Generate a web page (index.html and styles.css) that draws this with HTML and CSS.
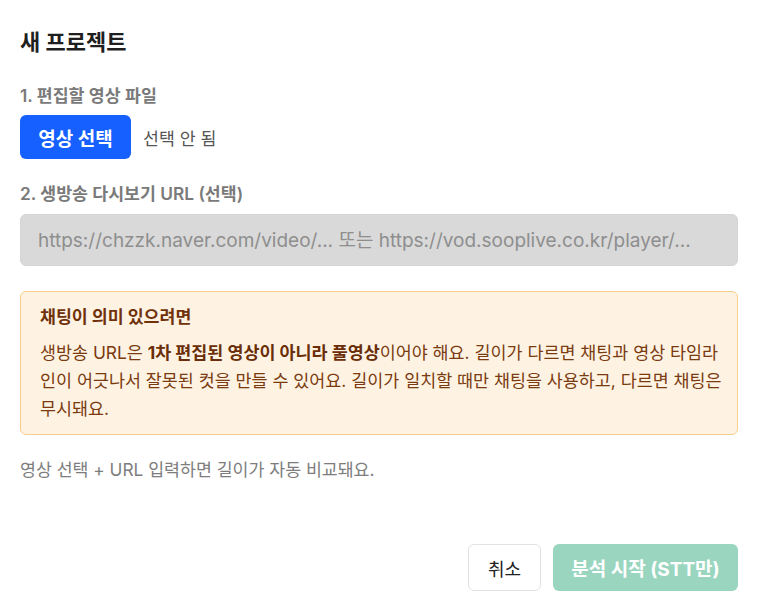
FILE: index.html
```html
<!DOCTYPE html>
<html lang="ko">
<head>
<meta charset="utf-8">
<link rel="stylesheet" href="styles.css">
</head>
<body>
<div class="dialog">
  <h1 class="title">새 프로젝트</h1>
  <div class="label first">1. 편집할 영상 파일</div>
  <div class="file-row">
    <button class="btn-primary">영상 선택</button>
    <span class="file-state">선택 안 됨</span>
  </div>
  <div class="label second">2. 생방송 다시보기 URL (선택)</div>
  <input class="url" type="text" placeholder="https://chzzk.naver.com/video/... 또는 https://vod.sooplive.co.kr/player/..." disabled>
  <div class="notice">
    <div class="notice-title">채팅이 의미 있으려면</div>
    <p class="notice-body">생방송 URL은 <b>1차 편집된 영상이 아니라 풀영상</b>이어야 해요. 길이가 다르면 채팅과 영상 타임라인이 어긋나서 잘못된 컷을 만들 수 있어요. 길이가 일치할 때만 채팅을 사용하고, 다르면 채팅은 무시돼요.</p>
  </div>
  <p class="hint">영상 선택 + URL 입력하면 길이가 자동 비교돼요.</p>
  <div class="actions">
    <button class="btn-cancel">취소</button>
    <button class="btn-start" disabled>분석 시작 (STT만)</button>
  </div>
</div>
</body>
</html>
```
FILE: styles.css
```css
* { box-sizing: border-box; }
html, body { margin: 0; padding: 0; background: #fff; }
body {
  font-family: Inter, "Noto Sans CJK KR", sans-serif;
  color: #222;
}
.dialog {
  width: 759px;
  padding: 28px 21px 0 20px;
  display: flex;
  flex-direction: column;
}
.title {
  margin: 0;
  font-size: 22px;
  font-weight: 700;
  line-height: 28px;
  color: #1f1f1f;
}
.label {
  font-size: 17.3px;
  font-weight: 600;
  color: #7a7a7a;
  line-height: 22px;
}
.label.first { margin-top: 29px; }
.label.second { margin-top: 24px; }
.file-row {
  display: flex;
  align-items: center;
  gap: 12px;
  margin-top: 8px;
}
.btn-primary {
  height: 44px;
  width: 111px;
  border: none;
  border-radius: 6px;
  background: #1560ff;
  color: #fff;
  font-family: inherit;
  font-size: 19px;
  font-weight: 700;
  padding: 0;
}
.file-state {
  font-size: 17.3px;
  color: #555;
}
.url {
  margin-top: 9px;
  height: 52px;
  width: 100%;
  border: 1px solid #d5d5d5;
  border-radius: 6px;
  background: #d9d9d9;
  padding: 0 17px;
  font-family: inherit;
  font-size: 19px;
  color: #888;
}
.url::placeholder { color: #8e8e8e; }
.notice {
  margin-top: 25px;
  background: #fef3e3;
  border: 1px solid #f8cf8a;
  border-radius: 6px;
  padding: 13px 15px 11px 19px;
  color: #7a3b10;
}
.notice-title {
  font-size: 17.3px;
  font-weight: 700;
  line-height: 24px;
  color: #6f320b;
}
.notice-body {
  margin: 10px 0 0 0;
  font-size: 17.4px;
  line-height: 28px;
  word-break: break-all;
}
.notice-body b { font-weight: 700; color: #6a2e08; }
.hint {
  margin: 23px 0 0 0;
  font-size: 17.3px;
  line-height: 24px;
  color: #7d7d7d;
}
.actions {
  display: flex;
  justify-content: flex-end;
  gap: 12px;
  margin-top: 62px;
}
.btn-cancel {
  height: 47px;
  width: 73px;
  border: 1px solid #e2e2e2;
  border-radius: 6px;
  background: #fff;
  color: #222;
  font-family: inherit;
  font-size: 18px;
  padding: 0;
}
.btn-start {
  height: 47px;
  width: 185px;
  border: none;
  border-radius: 6px;
  background: #9ad6bf;
  color: #fff;
  font-family: inherit;
  font-size: 19px;
  font-weight: 700;
  padding: 0;
}
```
